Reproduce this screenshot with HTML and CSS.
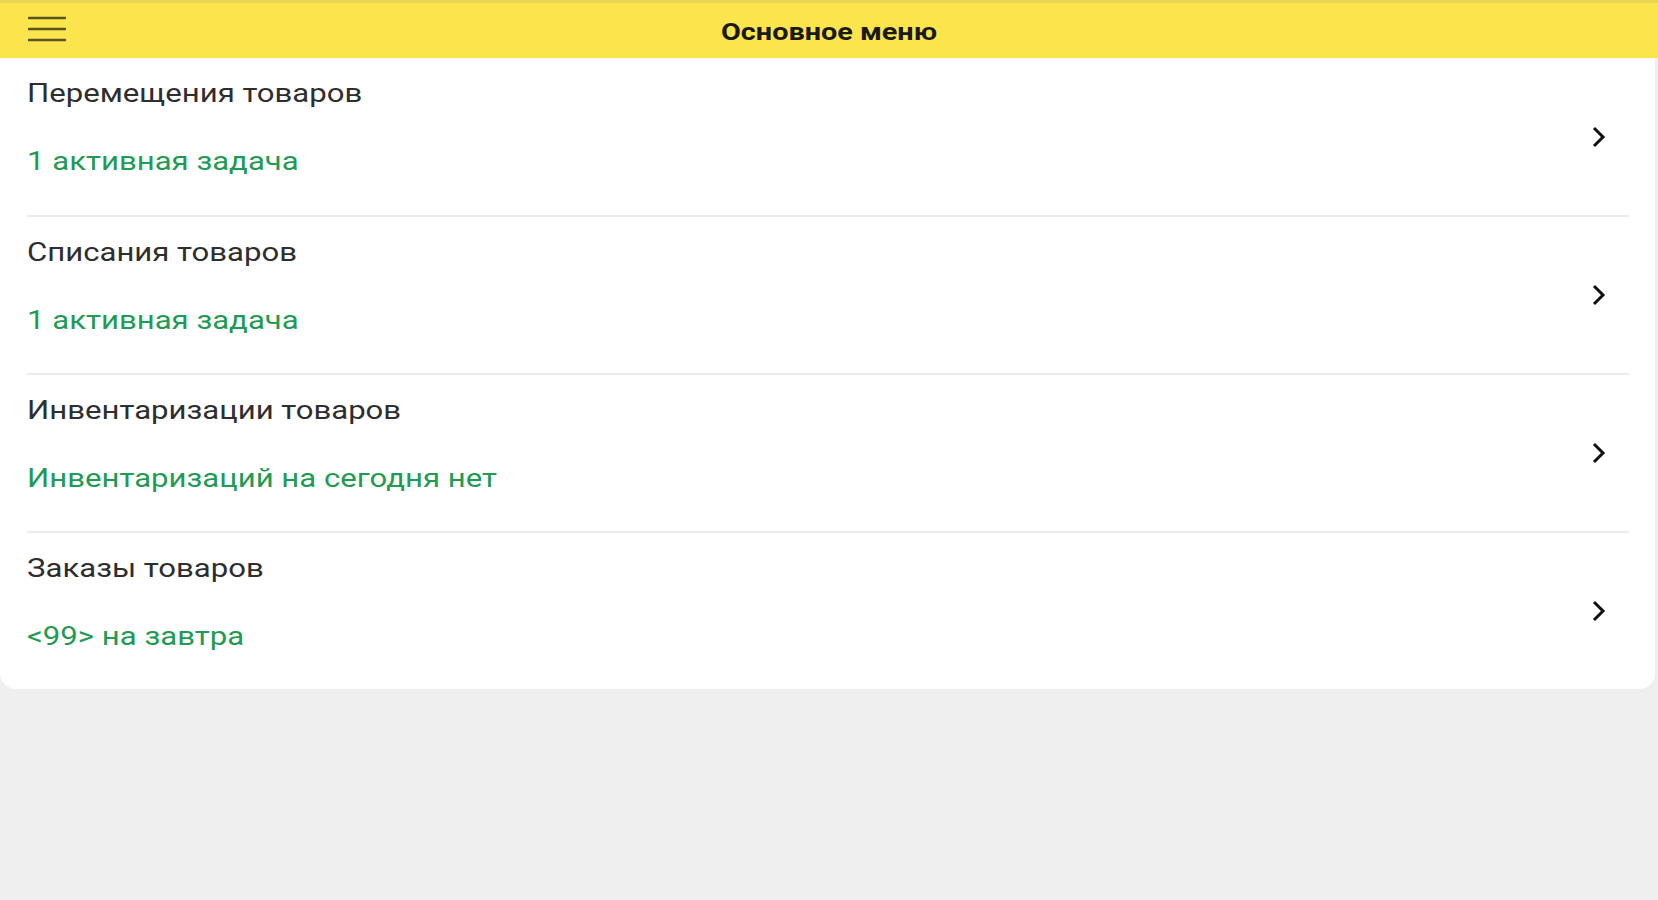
FILE: index.html
```html
<!DOCTYPE html>
<html lang="ru">
<head>
<meta charset="utf-8">
<title>Основное меню</title>
<link rel="stylesheet" href="styles.css">
</head>
<body>
<header class="topbar">
  <div class="menu-btn">
    <svg width="38" height="26" viewBox="0 0 38 26"><path d="M1 2h36M1 13h36M1 24h36" stroke="#5b5222" stroke-width="2.6" stroke-linecap="round" fill="none"/></svg>
  </div>
  <h1 class="title"><span class="title-text">Основное меню</span></h1>
</header>
<main class="card">
  <div class="row">
    <div class="texts"><div class="name">Перемещения товаров</div><div class="status">1 активная задача</div></div>
    <svg class="chev" width="16" height="22" viewBox="0 0 16 22"><path d="M3 2l9 9-9 9" stroke="#111" stroke-width="3" fill="none"/></svg>
  </div>
  <div class="row">
    <div class="texts"><div class="name">Списания товаров</div><div class="status">1 активная задача</div></div>
    <svg class="chev" width="16" height="22" viewBox="0 0 16 22"><path d="M3 2l9 9-9 9" stroke="#111" stroke-width="3" fill="none"/></svg>
  </div>
  <div class="row">
    <div class="texts"><div class="name">Инвентаризации товаров</div><div class="status">Инвентаризаций на сегодня нет</div></div>
    <svg class="chev" width="16" height="22" viewBox="0 0 16 22"><path d="M3 2l9 9-9 9" stroke="#111" stroke-width="3" fill="none"/></svg>
  </div>
  <div class="row">
    <div class="texts"><div class="name">Заказы товаров</div><div class="status">&lt;99&gt; на завтра</div></div>
    <svg class="chev" width="16" height="22" viewBox="0 0 16 22"><path d="M3 2l9 9-9 9" stroke="#111" stroke-width="3" fill="none"/></svg>
  </div>
</main>
</body>
</html>
```
FILE: styles.css
```css
html, body {
  margin: 0;
  padding: 0;
  background: #efefef;
  font-family: Roboto, "Liberation Sans", sans-serif;
}
.topbar {
  height: 58px;
  box-sizing: border-box;
  background: #fce54c;
  border-top: 3px solid #ead64e;
  display: flex;
  align-items: center;
  position: relative;
}
.menu-btn {
  padding-left: 28px;
  display: flex;
  align-items: center;
  margin-top: -4px;
}
.title {
  position: absolute;
  left: 0;
  right: 0;
  top: 0;
  margin: 0;
  text-align: center;
  font-size: 24px;
  font-weight: 700;
  line-height: 58px;
  color: #1a1a1a;
  pointer-events: none;
}
.title-text {
  display: inline-block;
  transform: scaleX(1.2);
}
.card {
  background: #fff;
  width: 1655px;
  border-radius: 0 0 16px 16px;
  display: flex;
  flex-direction: column;
}
.row {
  height: 158px;
  box-sizing: border-box;
  margin: 0 26px 0 27px;
  display: flex;
  align-items: center;
  justify-content: space-between;
  border-top: 2px solid #ebebeb;
}
.row:first-child {
  height: 157px;
  border-top: 0;
}
.texts {
  display: flex;
  flex-direction: column;
  align-items: flex-start;
  gap: 38px;
  margin-top: -17px;
}
.name,
.status {
  font-size: 25px;
  line-height: 30px;
  white-space: nowrap;
  transform: scaleX(1.245);
  transform-origin: left center;
}
.name {
  color: #2e2e2e;
}
.status {
  color: #1f9b53;
}
.chev {
  margin-right: 22px;
}
```
